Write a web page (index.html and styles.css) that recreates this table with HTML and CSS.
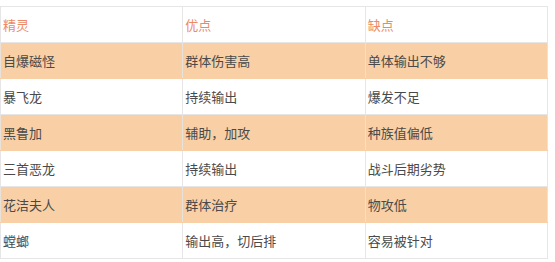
FILE: index.html
```html
<!DOCTYPE html>
<html lang="zh">
<head>
<meta charset="utf-8">
<link rel="stylesheet" href="styles.css">
</head>
<body>
<table class="tbl">
  <tr class="head"><td>精灵</td><td>优点</td><td>缺点</td></tr>
  <tr class="hl"><td>自爆磁怪</td><td>群体伤害高</td><td>单体输出不够</td></tr>
  <tr><td>暴飞龙</td><td>持续输出</td><td>爆发不足</td></tr>
  <tr class="hl"><td>黑鲁加</td><td>辅助，加攻</td><td>种族值偏低</td></tr>
  <tr><td>三首恶龙</td><td>持续输出</td><td>战斗后期劣势</td></tr>
  <tr class="hl"><td>花洁夫人</td><td>群体治疗</td><td>物攻低</td></tr>
  <tr><td>螳螂</td><td>输出高，切后排</td><td>容易被针对</td></tr>
</table>
</body>
</html>
```
FILE: styles.css
```css
html, body {
  margin: 0;
  padding: 0;
  background: #fff;
}
body {
  padding-top: 6px;
  font-family: "Noto Sans CJK SC", "Noto Sans", sans-serif;
  font-size: 13px;
  color: #4a4a4a;
}
.tbl {
  border-collapse: collapse;
  width: 548px;
  table-layout: fixed;
}
.tbl td {
  border: 1px solid #e6e6e6;
  height: 36px;
  padding: 0 0 0 2px;
  vertical-align: middle;
  box-sizing: border-box;
  line-height: 16px;
}
.head td {
  color: #ec8a66;
}
.hl td {
  background: #f9d0a5;
  border-color: #f9d0a5 #e9e2da;
}
```
